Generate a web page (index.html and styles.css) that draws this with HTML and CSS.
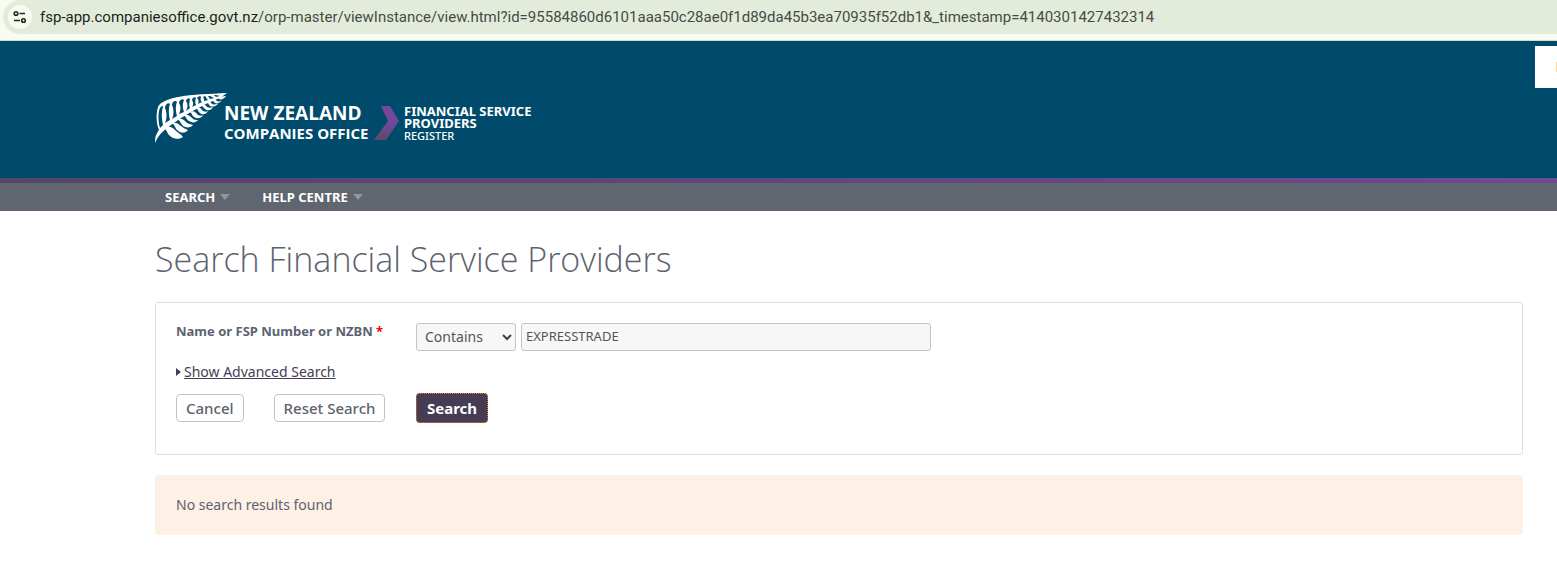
FILE: index.html
```html
<!DOCTYPE html>
<html lang="en">
<head>
    <meta charset="UTF-8">
    <meta name="viewport" content="width=device-width, initial-scale=1.0">
    <title>Search Financial Service Providers</title>
    <link rel="stylesheet" href="styles.css">
</head>
<body>
    <div class="browser-bar">
        <div class="address">
            <button class="site-info" type="button" aria-label="Site information">
                <svg width="14" height="14" viewBox="0 0 14 14" fill="none" stroke="#1f2a1f" stroke-width="1.6">
                    <circle cx="3" cy="3.5" r="1.8"/>
                    <path d="M6.5 3.5H12M1 10.5H7"/>
                    <circle cx="10.5" cy="10.5" r="1.8"/>
                </svg>
            </button>
            <span class="url"><span class="host">fsp-app.companiesoffice.govt.nz</span>/orp-master/viewInstance/view.html?id=95584860d6101aaa50c28ae0f1d89da45b3ea70935f52db1&amp;_timestamp=4140301427432314</span>
        </div>
    </div>

    <header class="header">
        <a class="logo" href="#">
            <svg class="fern" width="73" height="51" viewBox="0 0 73 51">
                <path fill="#fff" d="M0 51C0 45 1 42 4 38C1 31 1 21 3 15C5 10 13 7 23 5C38 2 55 2 72 1C66 6 57 9 49 13C37 19 22 28 12 36C6 41 3 44 0 51Z"/>
                <!-- gaps between the upper leaves -->
                <g fill="#004b6b">
                    <path d="M5 36C3 30 3 20 5 16C6 14 8 13 8 15C6 20 7 28 8 33Z"/>
                    <path d="M10 31C12 27 12 20 10 16C10 12 14 10 15 12C13 17 14 24 15 28Z"/>
                    <path d="M17 27C19 23 19 17 17 13C17 9 21 8 22 10C20 15 21 20 22 24Z"/>
                    <path d="M24 22C26 18 26 14 24 11C24 8 28 6 29 8C27 13 28 17 29 20Z"/>
                    <path d="M31 19C33 15 33 12 31 9C31 7 34 5 35 7C34 11 34 14 35 16Z"/>
                    <path d="M37 15C39 12 38 10 37 8C37 6 40 4 41 6C40 9 40 11 41 13Z"/>
                    <path d="M43 12C44 10 44 8 42 6C43 4 46 4 46 5C45 8 46 9 47 10Z"/>
                    <path d="M49 9C49 7 49 6 48 5C49 4 51 4 51 5C51 6 52 7 53 8Z"/>
                    <path d="M55 7L53 4H55L59 6Z"/>
                    <path d="M61 5L59 3H61L65 4Z"/>
                </g>
                <!-- lower leaves -->
                <g fill="#fff">
                    <path d="M9 36C13 33 17 35 20 38C23 41 26 42 28 45C24 48 17 47 14 43C12 41 12 38 9 36Z"/>
                    <path d="M17 31C20 30 23 31 26 34C28 36 31 37 33 38C30 42 25 41 22 38C20 36 20 33 17 31Z"/>
                    <path d="M23 27C27 26 29 28 31 30C33 32 36 32 38 33C36 36 31 36 28 34C26 32 25 29 23 27Z"/>
                    <path d="M29 23C33 22 35 24 37 26C39 28 41 28 43 28C41 31 37 31 34 29C32 28 31 25 29 23Z"/>
                    <path d="M35 20C38 18 41 20 42 22C44 24 46 24 48 23C46 27 42 27 39 25C37 24 37 21 35 20Z"/>
                    <path d="M41 16C44 15 46 16 47 18C49 20 51 20 53 19C51 23 47 23 45 21C43 20 43 17 41 16Z"/>
                    <path d="M46 13C49 12 51 13 52 15C54 16 56 16 58 15C56 19 52 19 50 17Z"/>
                    <path d="M52 10C54 9 56 10 57 12C59 13 61 12 63 12C60 15 57 15 55 14Z"/>
                    <path d="M57 8C60 7 61 8 62 9C64 10 66 9 67 8C65 11 62 12 60 11Z"/>
                    <path d="M62 5L71 4C69 7 66 8 64 7Z"/>
                </g>
            </svg>
            <span class="office">
                <span class="office-top">NEW ZEALAND</span>
                <span class="office-bottom">COMPANIES OFFICE</span>
            </span>
            <svg class="chevron" width="26" height="34" viewBox="0 0 26 34">
                <defs>
                    <linearGradient id="chevronFill" x1="0" y1="0" x2="0" y2="1">
                        <stop offset="0.5" stop-color="#74479c"/>
                        <stop offset="1" stop-color="#5c4a62"/>
                    </linearGradient>
                </defs>
                <path fill="url(#chevronFill)" d="M7 0H16L25 15L12 34H0L14 15Z"/>
            </svg>
            <span class="register">
                <strong>FINANCIAL SERVICE</strong>
                <strong>PROVIDERS</strong>
                <span>REGISTER</span>
            </span>
        </a>
        <div class="side-tab"></div>
    </header>

    <nav class="navbar">
        <a href="#">SEARCH <span class="arrow"></span></a>
        <a href="#">HELP CENTRE <span class="arrow"></span></a>
    </nav>

    <main class="container">
        <h1>Search Financial Service Providers</h1>

        <form class="search-panel">
            <div class="form-row">
                <label for="query">Name or FSP Number or NZBN <span class="required">*</span></label>
                <div class="fields">
                    <div class="select-wrap">
                        <select id="match" aria-label="Match type">
                            <option>Contains</option>
                            <option>Starts with</option>
                        </select>
                        <svg class="select-arrow" width="10" height="7" viewBox="0 0 10 7" fill="none" stroke="#444" stroke-width="2">
                            <path d="M1 1L5 5L9 1"/>
                        </svg>
                    </div>
                    <input type="text" id="query" value="EXPRESSTRADE">
                </div>
            </div>
            <div class="advanced">
                <span class="marker"></span>
                <a href="#">Show Advanced Search</a>
            </div>
            <div class="buttons">
                <div class="secondary">
                    <button type="button">Cancel</button>
                    <button type="reset">Reset Search</button>
                </div>
                <button class="primary" type="button">Search</button>
            </div>
        </form>

        <div class="message">No search results found</div>
    </main>
</body>
</html>
```

FILE: styles.css
```css
* {
    box-sizing: border-box;
}
body {
    font-family: "Noto Sans", sans-serif;
    font-size: 14px;
    line-height: 20px;
    margin: 0;
    background: #fff;
    color: #5c6370;
}
.browser-bar {
    height: 41px;
    padding-left: 3px;
    background: #f8fbf1;
    border-bottom: 1px solid #d3dccb;
}
.address {
    display: flex;
    align-items: center;
    gap: 8px;
    height: 34px;
    padding-left: 5px;
    background: #e3ecdb;
    border-radius: 17px 0 0 17px;
    overflow: hidden;
}
.site-info {
    display: flex;
    align-items: center;
    justify-content: center;
    flex: none;
    width: 24px;
    height: 24px;
    padding: 0;
    border: none;
    border-radius: 50%;
    background: #f8fbf1;
}
.url {
    font-family: Roboto, sans-serif;
    font-size: 15px;
    white-space: nowrap;
    color: #474b45;
}
.host {
    color: #1b1f1a;
}
.header {
    position: relative;
    height: 137px;
    padding: 51px 0 0 155px;
    background: #004b6b;
}
.logo {
    display: inline-flex;
    align-items: flex-start;
    color: #fff;
    text-decoration: none;
    white-space: nowrap;
}
.office {
    display: flex;
    flex-direction: column;
    width: 150px;
    margin-left: -4px;
    padding-top: 11px;
    font-family: "Open Sans", sans-serif;
    font-weight: bold;
    line-height: 20px;
}
.office-top {
    font-size: 19px;
}
.office-bottom {
    font-size: 15px;
}
.chevron {
    margin-top: 14px;
}
.register {
    display: flex;
    flex-direction: column;
    margin-left: 4px;
    padding-top: 13px;
    font-size: 13px;
    line-height: 12px;
}
.register span {
    font-size: 11px;
    font-weight: 500;
    line-height: 14px;
}
.side-tab {
    position: absolute;
    top: 5px;
    right: 0;
    width: 22px;
    height: 42px;
    background: linear-gradient(#ffd596, #ffd596) right center / 1px 10px no-repeat #fff;
}
.navbar {
    display: flex;
    gap: 32px;
    padding: 5px 0 0 165px;
    background: linear-gradient(90deg, #534468, #6b4a94) top / 100% 5px no-repeat #60666f;
}
.navbar a {
    display: flex;
    align-items: center;
    gap: 5px;
    height: 28px;
    color: #fff;
    font-size: 13px;
    font-weight: bold;
    text-decoration: none;
}
.arrow {
    border: 5px solid transparent;
    border-top: 6px solid #92969e;
    border-bottom: none;
}
.container {
    padding: 24px 34px 28px 155px;
}
h1 {
    margin: 0 0 19px;
    font-family: "Open Sans", sans-serif;
    font-size: 34px;
    font-weight: 300;
    line-height: 48px;
}
.search-panel {
    padding: 20px 20px 31px;
    border: 1px solid #dedede;
    border-radius: 3px;
}
.form-row {
    display: flex;
}
.form-row label {
    width: 240px;
    font-size: 13px;
    font-weight: bold;
    line-height: 16px;
}
.required {
    color: #f00;
}
.fields {
    display: flex;
    gap: 5px;
}
.select-wrap {
    position: relative;
}
.select-arrow {
    position: absolute;
    top: 11px;
    right: 4px;
    pointer-events: none;
}
.fields select,
.fields input {
    height: 28px;
    border: 1px solid #c4c4c4;
    border-radius: 3px;
    background: #f7f7f7;
    color: #555;
    font-family: inherit;
    font-size: 14px;
}
.fields select {
    appearance: none;
    width: 100px;
    padding: 0 8px 2px;
}
.fields input {
    width: 410px;
    padding: 0 4px 2px;
    font-size: 13px;
}
.advanced {
    display: flex;
    align-items: center;
    gap: 3px;
    margin-top: 11px;
}
.advanced a {
    color: #463c54;
}
.marker {
    border: 4px solid transparent;
    border-left: 5px solid #463c54;
    border-right: none;
}
.buttons {
    display: flex;
    align-items: center;
    margin-top: 11px;
}
.secondary {
    display: flex;
    gap: 30px;
    width: 240px;
}
.buttons button {
    height: 28px;
    padding: 0 9px;
    border: 1px solid #c4c4c4;
    border-radius: 4px;
    background: #fff;
    color: #5c6370;
    font-family: inherit;
    font-size: 15px;
    font-weight: 500;
}
.buttons .primary {
    height: 30px;
    padding: 0 10px;
    border: 1px dotted #f47b20;
    background: #463c54;
    color: #fff;
    font-weight: bold;
}
.message {
    margin-top: 20px;
    padding: 20px 21px;
    border-radius: 4px;
    background: #fdf0e5;
}
```
